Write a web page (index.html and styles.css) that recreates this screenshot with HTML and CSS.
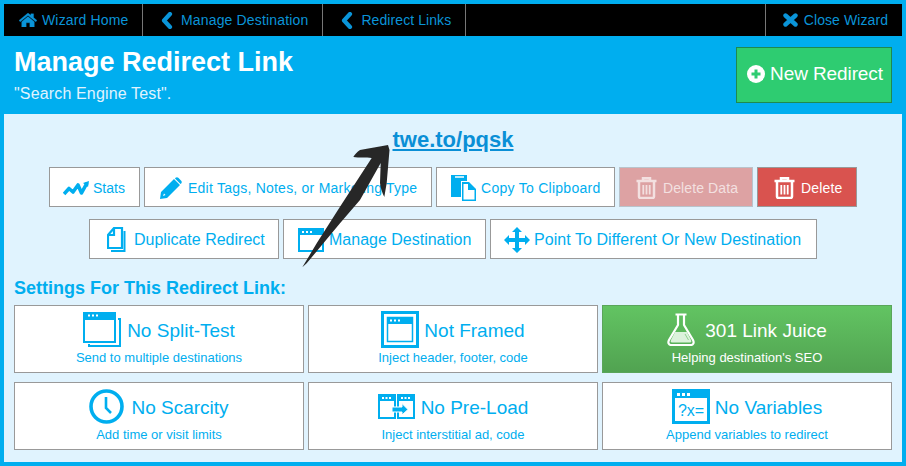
FILE: index.html
```html
<!DOCTYPE html>
<html lang="en">
<head>
<meta charset="utf-8">
<title>Manage Redirect Link</title>
<link rel="stylesheet" href="styles.css">
</head>
<body>
<div class="wizard">
  <nav class="nav">
    <a class="nav-item home"><svg class="ni ni-home" viewBox="0 0 18 14"><path d="M9 0 L11.800 2.300 V0.800 H14.600 V4.600 L18 7.400 L16.800 8.800 L9 2.400 L1.200 8.800 L0 7.400 Z M2.700 8.700 L9 3.600 L15.300 8.700 V14 H10.800 V9.800 H7.200 V14 H2.700 Z"/></svg><span>Wizard Home</span></a>
    <a class="nav-item back"><svg class="ni ni-chev" viewBox="0 0 12 17"><path d="M9 2 L3 8.500 L9 15" fill="none" stroke-width="4.200" stroke-linecap="round" stroke-linejoin="round"/></svg><span>Manage Destination</span></a>
    <a class="nav-item back tight"><svg class="ni ni-chev" viewBox="0 0 12 17"><path d="M9 2 L3 8.500 L9 15" fill="none" stroke-width="4.200" stroke-linecap="round" stroke-linejoin="round"/></svg><span>Redirect Links</span></a>
    <div class="nav-space"></div>
    <a class="nav-item close"><svg class="ni ni-x" viewBox="0 0 15 14"><path d="M2.500 2.500 L12.500 11.500 M12.500 2.500 L2.500 11.500" fill="none" stroke-width="4.400" stroke-linecap="round"/></svg><span>Close Wizard</span></a>
  </nav>
  <header class="head">
    <div>
      <h1 class="title">Manage Redirect Link</h1>
      <p class="subtitle">"Search Engine Test".</p>
    </div>
    <a class="new-btn"><svg class="plus" viewBox="0 0 18 18"><circle cx="9" cy="9" r="9" fill="#fff"/><path d="M9 4.500 V13.500 M4.500 9 H13.500" stroke="#2ecc71" stroke-width="3"/></svg>New Redirect</a>
  </header>
  <main class="panel">
    <div class="short"><a class="short-link">twe.to/pqsk</a></div>
    <div class="btn-row small">
      <a class="btn stats"><svg class="ic ic-stats" viewBox="0 0 26 16"><path d="M1 14 L6 8.500 L10 12 L15 5 L18.500 13 L24 3" fill="none" stroke="#00aeef" stroke-width="3.600" stroke-linejoin="round"/><path d="M20 3 L26 1 L25 7 Z" fill="#00aeef"/></svg>Stats</a>
      <a class="btn edit"><svg class="ic ic-pencil" viewBox="0 0 22 22"><path d="M0 22 L1 15 L14 2 L20 8 L7 21 Z M15.500 0.800 C16.500 0 17.500 0 18.300 0.800 L21.200 3.700 C22 4.500 22 5.500 21.200 6.500 L20.500 7 L15 1.500 Z" fill="#00aeef"/><path d="M3 19 L4 16.500 L5.500 18 Z" fill="#fff"/></svg>Edit Tags, Notes, or Marketing Type</a>
      <a class="btn copy"><svg class="ic ic-copy" viewBox="0 0 26 26"><path d="M0 0 H16 V6 H10 V22 H0 Z" fill="#00aeef"/><path d="M11 7 H18 L25 14 V26 H11 Z" fill="#00aeef"/><path d="M12.500 9 H17 V15 H23.500 V24.500 H12.500 Z" fill="#fff"/><path d="M4 2 H13" stroke="#fff" stroke-width="1.500"/></svg>Copy To Clipboard</a>
      <a class="btn danger faded"><svg class="ic ic-trash" viewBox="0 0 21 22"><path d="M0.500 4 H20.500 M7 4 V1.200 H14 V4 M3 4 V19.500 Q3 21 4.500 21 H16.500 Q18 21 18 19.500 V4" fill="none" stroke="#f3e0e0" stroke-width="2.500"/><path d="M7.300 8 V17.500 M10.500 8 V17.500 M13.700 8 V17.500" stroke="#f3e0e0" stroke-width="1.800"/></svg>Delete Data</a>
      <a class="btn danger solid"><svg class="ic ic-trash" viewBox="0 0 21 22"><path d="M0.500 4 H20.500 M7 4 V1.200 H14 V4 M3 4 V19.500 Q3 21 4.500 21 H16.500 Q18 21 18 19.500 V4" fill="none" stroke="#fff" stroke-width="2.500"/><path d="M7.300 8 V17.500 M10.500 8 V17.500 M13.700 8 V17.500" stroke="#fff" stroke-width="1.800"/></svg>Delete</a>
    </div>
    <div class="btn-row large">
      <a class="btn dup"><svg class="ic ic-dup" viewBox="0 0 19 25"><path d="M1 8 L7 1 H15 V21 H1 Z M7 1 V8 H1" fill="none" stroke="#00aeef" stroke-width="2.200"/><path d="M17.500 4 V24 H4" fill="none" stroke="#00aeef" stroke-width="2"/></svg>Duplicate Redirect</a>
      <a class="btn man"><svg class="ic ic-win" viewBox="0 0 26 24"><use href="#win"/></svg>Manage Destination</a>
      <a class="btn point"><svg class="ic ic-move" viewBox="0 0 26 26"><path d="M13 0 L18 5 H15 V11 H21 V8 L26 13 L21 18 V15 H15 V21 H18 L13 26 L8 21 H11 V15 H5 V18 L0 13 L5 8 V11 H11 V5 H8 Z" fill="#00aeef"/></svg>Point To Different Or New Destination</a>
    </div>
    <h2 class="settings">Settings For This Redirect Link:</h2>
    <div class="cards">
      <a class="card">
        <div class="card-top"><svg class="ci ci-split" viewBox="0 0 38 35"><path d="M1 1 H32 V30 H1 Z" fill="none" stroke="#00aeef" stroke-width="2"/><path d="M1 1 H32 V8 H1 Z" fill="#00aeef"/><path d="M5 3.500 H7 M9 3.500 H11 M13 3.500 H15" stroke="#fff" stroke-width="2"/><path d="M35 7 H37 V34 H6 V32" fill="none" stroke="#00aeef" stroke-width="2"/></svg><span>No Split-Test</span></div>
        <div class="card-sub">Send to multiple destinations</div>
      </a>
      <a class="card">
        <div class="card-top g5"><svg class="ci ci-frame" viewBox="0 0 38 37"><rect x="1.500" y="1.500" width="35" height="34" fill="none" stroke="#00aeef" stroke-width="3"/><path d="M6.500 6.500 H31.500 V30.500 H6.500 Z" fill="none" stroke="#00aeef" stroke-width="1.500"/><path d="M6.500 6.500 H31.500 V13 H6.500 Z" fill="#00aeef"/><path d="M9 9.500 H11 M13 9.500 H15 M17 9.500 H19" stroke="#fff" stroke-width="2"/></svg><span>Not Framed</span></div>
        <div class="card-sub">Inject header, footer, code</div>
      </a>
      <a class="card on">
        <div class="card-top g10"><svg class="ci ci-flask" viewBox="0 0 28 33"><path d="M8.500 1.500 H19.500 M11 2 V12 L2 27 C0.500 30 2 32 4 32 H24 C26 32 27.500 30 26 27 L17 12 V2" fill="none" stroke="#fff" stroke-width="2.200"/><path d="M8 19 H20 L24 27 Q25 29.500 23 29.500 H5 Q3 29.500 4 27 Z" fill="#dcf2dc"/><path d="M18 21 L21.500 27" stroke="#8fd08f" stroke-width="1"/></svg><span>301 Link Juice</span></div>
        <div class="card-sub">Helping destination's SEO</div>
      </a>
      <a class="card">
        <div class="card-top g7"><svg class="ci ci-clock" viewBox="0 0 35 35"><circle cx="17.500" cy="17.500" r="15.500" fill="none" stroke="#00aeef" stroke-width="3.600"/><path d="M17 8 V19 L22 24" fill="none" stroke="#00aeef" stroke-width="2.600"/></svg><span>No Scarcity</span></div>
        <div class="card-sub">Add time or visit limits</div>
      </a>
      <a class="card">
        <div class="card-top"><svg class="ci ci-pre" viewBox="0 0 37 25"><path d="M1 1 H17 V24 H1 Z M20 1 H36 V24 H20 Z" fill="none" stroke="#00aeef" stroke-width="2"/><path d="M1 1 H17 V7 H1 Z M20 1 H36 V7 H20 Z" fill="#00aeef"/><path d="M4 4 H6 M7.500 4 H9.500 M11 4 H13 M23 4 H25 M26.500 4 H28.500 M30 4 H32" stroke="#fff" stroke-width="2"/><path d="M14 13 H24 V9.500 L30 15.500 L24 21 V18 H14 Z" fill="#00aeef" stroke="#fff" stroke-width="1"/></svg><span>No Pre-Load</span></div>
        <div class="card-sub">Inject interstitial ad, code</div>
      </a>
      <a class="card">
        <div class="card-top g5"><svg class="ci ci-var" viewBox="0 0 38 35"><rect x="1.500" y="1.500" width="35" height="32" fill="none" stroke="#00aeef" stroke-width="3"/><path d="M2 2 H36 V9 H2 Z" fill="#00aeef"/><path d="M5 5.500 H8 M10 5.500 H13 M15 5.500 H18" stroke="#fff" stroke-width="3"/><text x="19" y="26.500" class="var-text">?x=</text></svg><span>No Variables</span></div>
        <div class="card-sub">Append variables to redirect</div>
      </a>
    </div>
    <svg class="arrow" viewBox="0 0 100 125"><path d="M2.300 122.300 L16.700 98.300 L40 61.700 L71.700 13 C66 12 59 13 53.300 12 C55 9 57 7 60 5 C69 3 79 2 88 0 L89.500 5 L86.700 38 L84.300 52 C82 47 80.500 43 80 38 L80.700 18 L60 55 L40 78.300 L6.700 118.300 Z" fill="#272727"/></svg>
  </main>
</div>
<svg class="defs" width="0" height="0"><defs><g id="win"><path d="M1 1 H25 V23 H1 Z" fill="none" stroke="#00aeef" stroke-width="2"/><path d="M1 1 H25 V7 H1 Z" fill="#00aeef"/><path d="M4 4 H6 M8 4 H10 M12 4 H14" stroke="#fff" stroke-width="2"/></g></defs></svg>
</body>
</html>
```
FILE: styles.css
```css
* { box-sizing: border-box; }
html, body { margin: 0; height: 466px; overflow: hidden; }
body { background: #00aeef; font-family: "Liberation Sans", Arial, sans-serif; padding: 4px; }
.wizard { display: flex; flex-direction: column; height: 458px; }
.defs { position: absolute; }

.nav { display: flex; height: 32px; background: #000; color: #0a94d8; font-size: 14px; }
.nav-item { display: flex; align-items: center; border-right: 1px solid #777; padding: 0 14px; letter-spacing: .16px; white-space: nowrap; }
.nav-item.home { width: 139px; padding-left: 15px; gap: 5px; }
.nav-item.back { gap: 8px; padding-left: 18px; }
.nav-item.tight { letter-spacing: .08px; }
.nav-space { flex: 1; border-right: 1px solid #777; }
.nav-item.close { border-right: 0; padding-left: 17px; gap: 6px; letter-spacing: .08px; }
.ni { fill: #0a94d8; stroke: #0a94d8; flex: none; }
.ni-home { width: 18px; height: 14px; stroke-width: .3; margin-top: -1px; }
.ni-chev { width: 12px; height: 17px; fill: none; }
.ni-x { width: 15px; height: 14px; fill: none; }

.head { height: 78px; display: flex; justify-content: space-between; padding: 11px 10px 0; color: #fff; }
.title { margin: 0; font-size: 27px; line-height: 31px; font-weight: 700; }
.subtitle { margin: 7px 0 0; font-size: 16px; line-height: 18px; color: #e0f3fe; letter-spacing: .15px; }
.new-btn { display: flex; align-items: center; justify-content: center; gap: 5px; width: 156px; height: 56px; padding: 0 0 2px 2px; background: #2ecc71; border: 1px solid #1e8a50; font-size: 19px; letter-spacing: -.1px; }
.plus { width: 18px; height: 18px; }

.panel { position: relative; flex: 1; background: #e0f3fe; padding: 0 10px; }
.short { text-align: center; height: 53px; padding-top: 13px; }
.short-link { color: #0a8fd6; font-size: 22px; line-height: 26px; font-weight: 700; text-decoration: underline; }
.btn-row { display: flex; justify-content: center; gap: 4px; }
.btn { display: flex; flex: none; align-items: center; height: 40px; padding: 1px 0 0 13px; background: #fff; border: 1px solid #999; color: #00aeef; white-space: nowrap; }
.btn-row.small { font-size: 14px; }
.btn-row.large { font-size: 16px; margin-top: 12px; }
.stats { width: 91px; }
.edit { width: 288px; letter-spacing: .23px; }
.copy { width: 179px; letter-spacing: .27px; padding-left: 14px; }
.danger { background: #d9534f; color: #fff; padding-left: 16px; }
.solid { width: 100px; letter-spacing: .15px; }
.faded { width: 134px; background: #dda2a3; border-color: #b9c3cb; color: #f3e0e0; letter-spacing: .1px; }
.ic { flex: none; margin-right: 4px; }
.ic-stats { width: 26px; height: 16px; }
.ic-pencil { width: 22px; height: 22px; margin: 0 6px 0 2px; }
.ic-copy { width: 26px; height: 26px; }
.ic-trash { width: 21px; height: 22px; margin-right: 6px; }
.ic-dup { width: 19px; height: 25px; margin: 0 8px 0 3px; }
.ic-win { width: 26px; height: 24px; margin-right: 5px; }
.ic-move { width: 26px; height: 26px; }
.dup { width: 190px; padding-left: 14px; }
.man { width: 203px; padding-left: 14px; }
.point { width: 327px; letter-spacing: .05px; }

.settings { margin: 19px 0 6px; font-size: 18px; line-height: 21px; color: #00aeef; font-weight: 700; }
.cards { display: grid; grid-template-columns: repeat(3, 290px); grid-auto-rows: 68px; column-gap: 4px; row-gap: 9px; }
.card { display: flex; flex-direction: column; align-items: center; background: #fff; border: 1px solid #999; color: #00aeef; }
.card.on { background: linear-gradient(#62c462, #51a351); border-color: #5aa55a; color: #fff; }
.card-top { height: 44px; padding-top: 6px; display: flex; align-items: center; justify-content: center; font-size: 19px; gap: 6px; }
.card-top.g5 { gap: 5px; }
.card-top.g7 { gap: 7px; }
.card-top.g10 { gap: 10px; }
.card-sub { font-size: 13px; line-height: 15px; }
.ci { flex: none; margin-top: -3px; }
.ci-split { width: 38px; height: 35px; }
.ci-frame { width: 38px; height: 37px; }
.ci-flask { width: 28px; height: 33px; }
.ci-clock { width: 35px; height: 35px; }
.ci-pre { width: 37px; height: 25px; }
.ci-var { width: 38px; height: 35px; }
.var-text { font-size: 16px; fill: #00aeef; text-anchor: middle; font-family: "Liberation Sans", Arial, sans-serif; }
.arrow { position: absolute; left: 296px; top: 31px; width: 100px; height: 125px; }
```
